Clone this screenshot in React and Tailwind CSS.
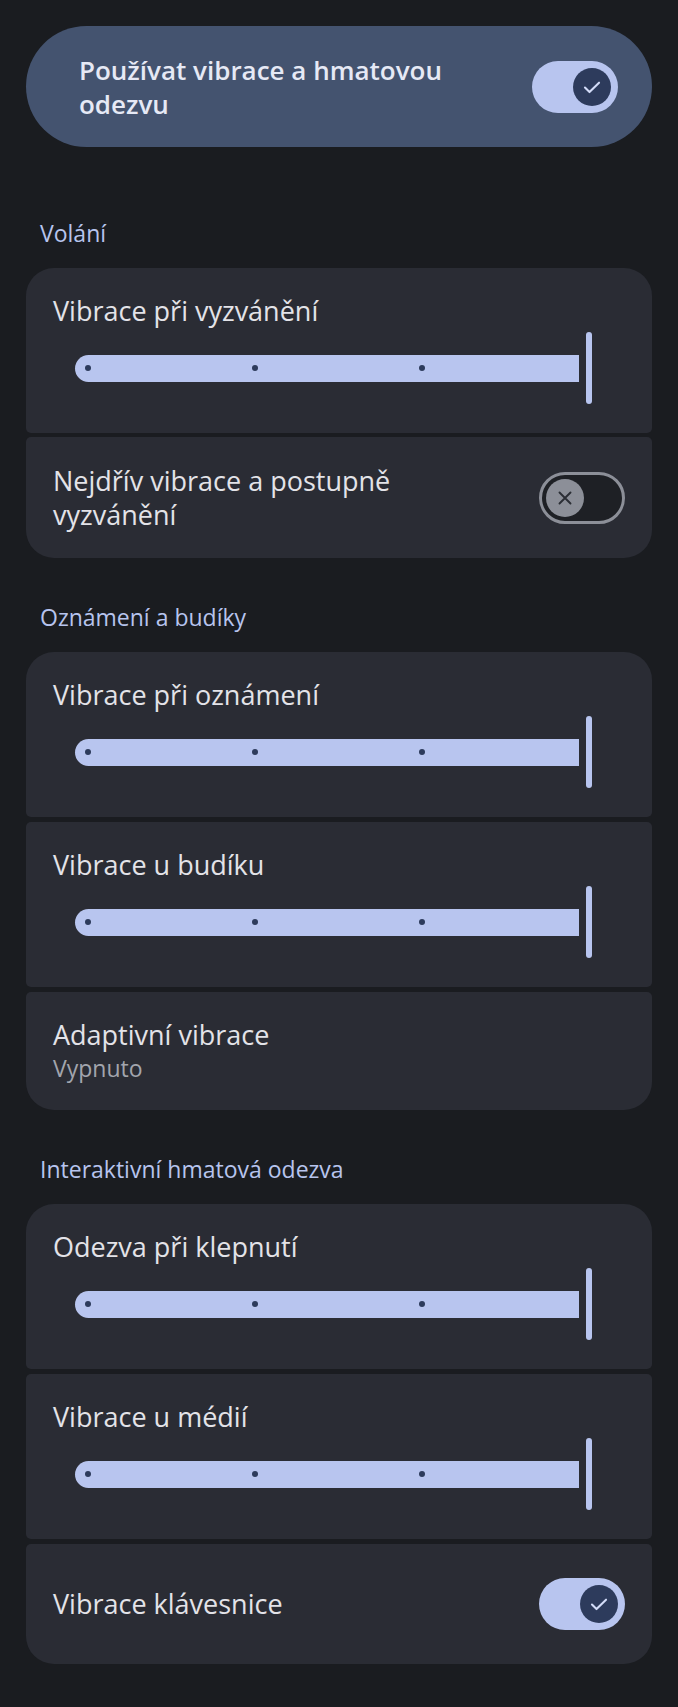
import React from "react";

const font = { fontFamily: "'Open Sans', Roboto, sans-serif" };

function CheckIcon() {
  return (
    <svg width="26" height="26" viewBox="0 0 24 24" fill="none" stroke="#d3dcf8" strokeWidth="1.9" strokeLinecap="round" strokeLinejoin="round">
      <path d="M5.5 12.5l4.2 4.2L18.5 8" />
    </svg>
  );
}

function XIcon() {
  return (
    <svg width="24" height="24" viewBox="0 0 24 24" fill="none" stroke="#2b2e35" strokeWidth="1.9" strokeLinecap="round">
      <path d="M6.5 6.5l11 11M17.5 6.5l-11 11" />
    </svg>
  );
}

function ToggleOn() {
  return (
    <div className="flex h-[52px] w-[86px] shrink-0 items-center justify-end rounded-full bg-[#b8c5ef] pr-[7px]">
      <div className="flex h-[38px] w-[38px] items-center justify-center rounded-full bg-[#2d3b5c]">
        <CheckIcon />
      </div>
    </div>
  );
}

function ToggleOff() {
  return (
    <div className="flex h-[52px] w-[86px] shrink-0 items-center justify-start rounded-full border-[3px] border-[#8c8f98] bg-[#1e2025] pl-[4px]">
      <div className="flex h-[38px] w-[38px] items-center justify-center rounded-full bg-[#8c8f98]">
        <XIcon />
      </div>
    </div>
  );
}

function Slider() {
  return (
    <div className="mt-[4px] flex h-[72px] items-center pl-[49px] pr-[60px]">
      <div className="flex h-[27px] flex-1 items-center gap-[161px] rounded-l-full rounded-r-[3px] bg-[#b8c5ef] pl-[10px]">
        <div className="h-[6px] w-[6px] rounded-full bg-[#2d3b5c]" />
        <div className="h-[6px] w-[6px] rounded-full bg-[#2d3b5c]" />
        <div className="h-[6px] w-[6px] rounded-full bg-[#2d3b5c]" />
      </div>
      <div className="ml-[7px] h-[72px] w-[6px] rounded-full bg-[#b8c5ef]" />
    </div>
  );
}

function SliderCard({ title, rounded }) {
  return (
    <div className={`h-[165px] bg-[#2a2c34] pt-[26px] ${rounded}`}>
      <div className="pl-[27px] text-[27px] leading-[34px] text-[#e3e3e8]">{title}</div>
      <Slider />
    </div>
  );
}

function Header({ children, first }) {
  return (
    <div className={`${first ? "pt-[72px]" : "pt-[45px]"} pb-[21px] pl-[14px] text-[23px] leading-[28px] text-[#b7c4ee]`}>
      {children}
    </div>
  );
}

export default function App() {
  return (
    <div style={font} className="min-h-[1707px] w-[678px] bg-[#1a1c20] px-[26px] pt-[26px]">
      <div className="flex h-[121px] items-center justify-between rounded-full bg-[#44536f] pl-[53px] pr-[34px]">
        <div className="w-[410px] text-[26px] font-semibold leading-[34px] text-[#e6e9f5]">
          Používat vibrace a hmatovou odezvu
        </div>
        <ToggleOn />
      </div>

      <Header first>Volání</Header>
      <div className="flex flex-col gap-[4px]">
        <SliderCard title="Vibrace při vyzvánění" rounded="rounded-t-[28px] rounded-b-[5px]" />
        <div className="flex h-[121px] items-center justify-between rounded-b-[28px] rounded-t-[5px] bg-[#2a2c34] pl-[27px] pr-[27px]">
          <div className="w-[410px] text-[27px] leading-[34px] text-[#e3e3e8]">
            Nejdřív vibrace a postupně vyzvánění
          </div>
          <ToggleOff />
        </div>
      </div>

      <Header>Oznámení a budíky</Header>
      <div className="flex flex-col gap-[5px]">
        <SliderCard title="Vibrace při oznámení" rounded="rounded-t-[28px] rounded-b-[5px]" />
        <SliderCard title="Vibrace u budíku" rounded="rounded-[5px]" />
        <div className="flex h-[118px] flex-col justify-center rounded-b-[28px] rounded-t-[5px] bg-[#2a2c34] pl-[27px]">
          <div className="text-[27px] leading-[34px] text-[#e3e3e8]">Adaptivní vibrace</div>
          <div className="text-[23px] leading-[32px] text-[#a2a5ad]">Vypnuto</div>
        </div>
      </div>

      <Header>Interaktivní hmatová odezva</Header>
      <div className="flex flex-col gap-[5px]">
        <SliderCard title="Odezva při klepnutí" rounded="rounded-t-[28px] rounded-b-[5px]" />
        <SliderCard title="Vibrace u médií" rounded="rounded-[5px]" />
        <div className="flex h-[120px] items-center justify-between rounded-b-[28px] rounded-t-[5px] bg-[#2a2c34] pl-[27px] pr-[27px]">
          <div className="text-[27px] leading-[34px] text-[#e3e3e8]">Vibrace klávesnice</div>
          <ToggleOn />
        </div>
      </div>
    </div>
  );
}
